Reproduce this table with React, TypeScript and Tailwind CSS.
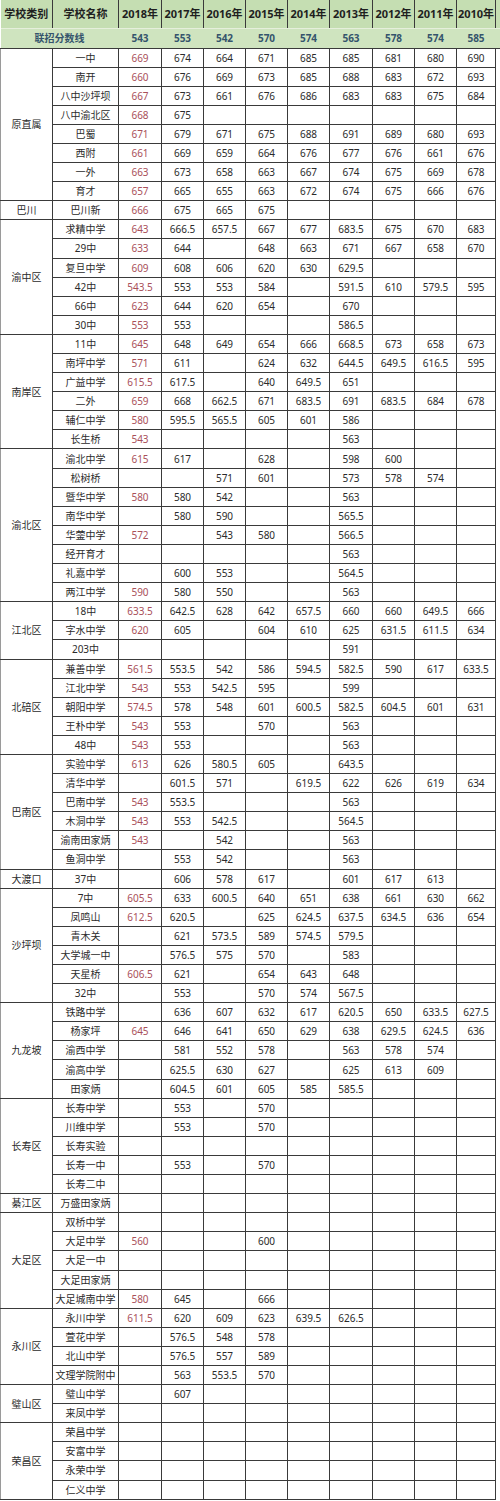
const years = ["2018", "2017", "2016", "2015", "2014", "2013", "2012", "2011", "2010"];
const baseline = ["543", "553", "542", "570", "574", "563", "578", "574", "585"];

type School = [string, string[]];
type Group = { area: string; schools: School[] };

const groups: Group[] = [
  {
    area: "原直属",
    schools: [
      ["一中", ["669", "674", "664", "671", "685", "685", "681", "680", "690"]],
      ["南开", ["660", "676", "669", "673", "685", "688", "683", "672", "693"]],
      ["八中沙坪坝", ["667", "673", "661", "676", "686", "683", "683", "675", "684"]],
      ["八中渝北区", ["668", "675"]],
      ["巴蜀", ["671", "679", "671", "675", "688", "691", "689", "680", "693"]],
      ["西附", ["661", "669", "659", "664", "676", "677", "676", "661", "676"]],
      ["一外", ["663", "673", "658", "663", "667", "674", "675", "669", "678"]],
      ["育才", ["657", "665", "655", "663", "672", "674", "675", "666", "676"]],
    ],
  },
  { area: "巴川", schools: [["巴川新", ["666", "675", "665", "675"]]] },
  {
    area: "渝中区",
    schools: [
      ["求精中学", ["643", "666.5", "657.5", "667", "677", "683.5", "675", "670", "683"]],
      ["29中", ["633", "644", "", "648", "663", "671", "667", "658", "670"]],
      ["复旦中学", ["609", "608", "606", "620", "630", "629.5"]],
      ["42中", ["543.5", "553", "553", "584", "", "591.5", "610", "579.5", "595"]],
      ["66中", ["623", "644", "620", "654", "", "670"]],
      ["30中", ["553", "553", "", "", "", "586.5"]],
    ],
  },
  {
    area: "南岸区",
    schools: [
      ["11中", ["645", "648", "649", "654", "666", "668.5", "673", "658", "673"]],
      ["南坪中学", ["571", "611", "", "624", "632", "644.5", "649.5", "616.5", "595"]],
      ["广益中学", ["615.5", "617.5", "", "640", "649.5", "651"]],
      ["二外", ["659", "668", "662.5", "671", "683.5", "691", "683.5", "684", "678"]],
      ["辅仁中学", ["580", "595.5", "565.5", "605", "601", "586"]],
      ["长生桥", ["543", "", "", "", "", "563"]],
    ],
  },
  {
    area: "渝北区",
    schools: [
      ["渝北中学", ["615", "617", "", "628", "", "598", "600"]],
      ["松树桥", ["", "", "571", "601", "", "573", "578", "574"]],
      ["暨华中学", ["580", "580", "542", "", "", "563"]],
      ["南华中学", ["", "580", "590", "", "", "565.5"]],
      ["华蓥中学", ["572", "", "543", "580", "", "566.5"]],
      ["经开育才", ["", "", "", "", "", "563"]],
      ["礼嘉中学", ["", "600", "553", "", "", "564.5"]],
      ["两江中学", ["590", "580", "550", "", "", "563"]],
    ],
  },
  {
    area: "江北区",
    schools: [
      ["18中", ["633.5", "642.5", "628", "642", "657.5", "660", "660", "649.5", "666"]],
      ["字水中学", ["620", "605", "", "604", "610", "625", "631.5", "611.5", "634"]],
      ["203中", ["", "", "", "", "", "591"]],
    ],
  },
  {
    area: "北碚区",
    schools: [
      ["兼善中学", ["561.5", "553.5", "542", "586", "594.5", "582.5", "590", "617", "633.5"]],
      ["江北中学", ["543", "553", "542.5", "595", "", "599"]],
      ["朝阳中学", ["574.5", "578", "548", "601", "600.5", "582.5", "604.5", "601", "631"]],
      ["王朴中学", ["543", "553", "", "570", "", "563"]],
      ["48中", ["543", "553", "", "", "", "563"]],
    ],
  },
  {
    area: "巴南区",
    schools: [
      ["实验中学", ["613", "626", "580.5", "605", "", "643.5"]],
      ["清华中学", ["", "601.5", "571", "", "619.5", "622", "626", "619", "634"]],
      ["巴南中学", ["543", "553.5", "", "", "", "563"]],
      ["木洞中学", ["543", "553", "542.5", "", "", "564.5"]],
      ["渝南田家炳", ["543", "", "542", "", "", "563"]],
      ["鱼洞中学", ["", "553", "542", "", "", "563"]],
    ],
  },
  { area: "大渡口", schools: [["37中", ["", "606", "578", "617", "", "601", "617", "613"]]] },
  {
    area: "沙坪坝",
    schools: [
      ["7中", ["605.5", "633", "600.5", "640", "651", "638", "661", "630", "662"]],
      ["凤鸣山", ["612.5", "620.5", "", "625", "624.5", "637.5", "634.5", "636", "654"]],
      ["青木关", ["", "621", "573.5", "589", "574.5", "579.5"]],
      ["大学城一中", ["", "576.5", "575", "570", "", "583"]],
      ["天星桥", ["606.5", "621", "", "654", "643", "648"]],
      ["32中", ["", "553", "", "570", "574", "567.5"]],
    ],
  },
  {
    area: "九龙坡",
    schools: [
      ["铁路中学", ["", "636", "607", "632", "617", "620.5", "650", "633.5", "627.5"]],
      ["杨家坪", ["645", "646", "641", "650", "629", "638", "629.5", "624.5", "636"]],
      ["渝西中学", ["", "581", "552", "578", "", "563", "578", "574"]],
      ["渝高中学", ["", "625.5", "630", "627", "", "625", "613", "609"]],
      ["田家炳", ["", "604.5", "601", "605", "585", "585.5"]],
    ],
  },
  {
    area: "长寿区",
    schools: [
      ["长寿中学", ["", "553", "", "570"]],
      ["川维中学", ["", "553", "", "570"]],
      ["长寿实验", []],
      ["长寿一中", ["", "553", "", "570"]],
      ["长寿二中", []],
    ],
  },
  { area: "綦江区", schools: [["万盛田家炳", []]] },
  {
    area: "大足区",
    schools: [
      ["双桥中学", []],
      ["大足中学", ["560", "", "", "600"]],
      ["大足一中", []],
      ["大足田家炳", []],
      ["大足城南中学", ["580", "645", "", "666"]],
    ],
  },
  {
    area: "永川区",
    schools: [
      ["永川中学", ["611.5", "620", "609", "623", "639.5", "626.5"]],
      ["萱花中学", ["", "576.5", "548", "578"]],
      ["北山中学", ["", "576.5", "557", "589"]],
      ["文理学院附中", ["", "563", "553.5", "570"]],
    ],
  },
  {
    area: "璧山区",
    schools: [
      ["璧山中学", ["", "607"]],
      ["来凤中学", []],
    ],
  },
  {
    area: "荣昌区",
    schools: [
      ["荣昌中学", []],
      ["安富中学", []],
      ["永荣中学", []],
      ["仁义中学", []],
    ],
  },
];

const colWidths = [52, 66, 43, 42, 42, 42, 42, 43, 42, 42, 39, 5];

export default function App() {
  return (
    <div
      className="w-[500px] bg-white text-[#2b2b2b]"
      style={{ fontFamily: '"Noto Sans", "Noto Sans CJK SC", sans-serif' }}
    >
      <table className="w-[500px] table-fixed border-collapse text-center text-[10px] leading-[12px]">
        <colgroup>
          {colWidths.map((w, i) => (
            <col key={i} style={{ width: w }} />
          ))}
        </colgroup>
        <thead>
          <tr className="h-[28px] bg-[#c5deb2] text-[11px] font-bold text-[#1f1f1f]">
            <th className="border-r border-b border-r-[#3a3a3a] border-b-[#e6efdc] p-0">学校类别</th>
            <th className="border-r border-b border-r-[#3a3a3a] border-b-[#e6efdc] p-0">学校名称</th>
            {years.map((y) => (
              <th key={y} className="border-r border-b border-r-[#3a3a3a] border-b-[#e6efdc] p-0 whitespace-nowrap">
                {y}年
              </th>
            ))}
            <th className="border-b border-b-[#e6efdc] p-0" />
          </tr>
          <tr className="h-[20px] bg-[#cfe4bf] font-bold text-[#35546c]">
            <td colSpan={2} className="border-b border-[#3a3a3a] p-0">
              联招分数线
            </td>
            {baseline.map((v, i) => (
              <td key={i} className="border-b border-[#3a3a3a] p-0">
                {v}
              </td>
            ))}
            <td className="border-b border-[#3a3a3a] p-0" />
          </tr>
        </thead>
        <tbody>
          {groups.map((g) =>
            g.schools.map(([name, scores], si) => (
              <tr key={g.area + name} className="h-[19.1px]">
                {si === 0 && (
                  <td
                    rowSpan={g.schools.length}
                    className="border-l border-b border-r border-l-[#9a9a9a] border-b-[#3a3a3a] border-r-[#3a3a3a] p-0"
                  >
                    {g.area}
                  </td>
                )}
                <td className="border border-[#3a3a3a] p-0 whitespace-nowrap">{name}</td>
                {years.map((y, i) => (
                  <td
                    key={y}
                    className={
                      i === 0
                        ? "border border-[#3a3a3a] p-0 text-[#a9505a]"
                        : "border border-[#3a3a3a] p-0"
                    }
                  >
                    {scores[i] ?? ""}
                  </td>
                ))}
                <td className="p-0" />
              </tr>
            ))
          )}
        </tbody>
      </table>
    </div>
  );
}
